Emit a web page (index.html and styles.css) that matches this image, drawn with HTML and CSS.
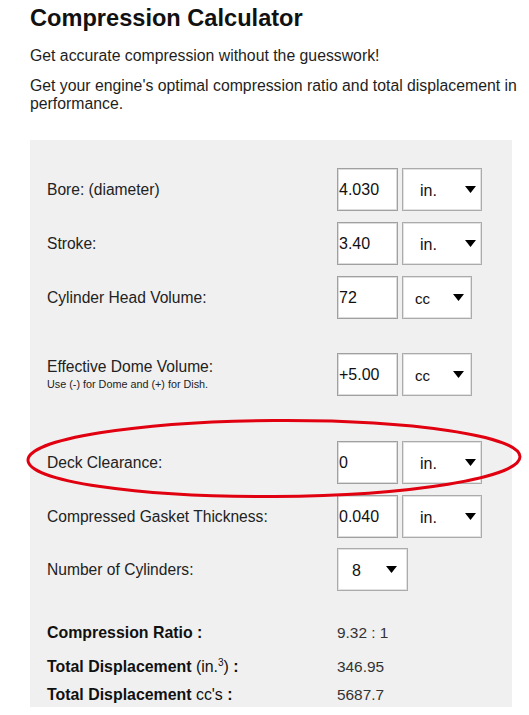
FILE: index.html
```html
<!DOCTYPE html>
<html>
<head>
<meta charset="utf-8">
<link rel="stylesheet" href="styles.css">
</head>
<body>
<div class="page">
  <h1 class="title">Compression Calculator</h1>
  <p class="intro first">Get accurate compression without the guesswork!</p>
  <p class="intro second">Get your engine's optimal compression ratio and total displacement in<br>performance.</p>

  <div class="panel">
    <div class="row">
      <div class="label">Bore: (diameter)</div>
      <div class="field">4.030</div>
      <div class="sel sel-in"><span>in.</span><svg class="arrow" width="11" height="7" viewBox="0 0 11 7"><path d="M0 0H11L5.5 7Z"/></svg></div>
    </div>
    <div class="row gap">
      <div class="label">Stroke:</div>
      <div class="field">3.40</div>
      <div class="sel sel-in"><span>in.</span><svg class="arrow" width="11" height="7" viewBox="0 0 11 7"><path d="M0 0H11L5.5 7Z"/></svg></div>
    </div>
    <div class="row gap">
      <div class="label">Cylinder Head Volume:</div>
      <div class="field">72</div>
      <div class="sel sel-cc"><span>cc</span><svg class="arrow" width="11" height="7" viewBox="0 0 11 7"><path d="M0 0H11L5.5 7Z"/></svg></div>
    </div>
    <div class="row row-dome">
      <div class="label">Effective Dome Volume:<div class="note">Use (-) for Dome and (+) for Dish.</div></div>
      <div class="field">+5.00</div>
      <div class="sel sel-cc"><span>cc</span><svg class="arrow" width="11" height="7" viewBox="0 0 11 7"><path d="M0 0H11L5.5 7Z"/></svg></div>
    </div>
    <div class="row row-deck">
      <div class="label">Deck Clearance:</div>
      <div class="field">0</div>
      <div class="sel sel-in"><span>in.</span><svg class="arrow" width="11" height="7" viewBox="0 0 11 7"><path d="M0 0H11L5.5 7Z"/></svg></div>
    </div>
    <div class="row gap">
      <div class="label">Compressed Gasket Thickness:</div>
      <div class="field">0.040</div>
      <div class="sel sel-in"><span>in.</span><svg class="arrow" width="11" height="7" viewBox="0 0 11 7"><path d="M0 0H11L5.5 7Z"/></svg></div>
    </div>
    <div class="row row-last">
      <div class="label">Number of Cylinders:</div>
      <div class="sel sel-cyl"><span>8</span><svg class="arrow" width="11" height="7" viewBox="0 0 11 7"><path d="M0 0H11L5.5 7Z"/></svg></div>
    </div>

    <div class="result result-first">
      <div class="rlabel"><b>Compression Ratio :</b></div>
      <div class="rvalue">9.32 : 1</div>
    </div>
    <div class="result result-disp">
      <div class="rlabel"><b>Total Displacement</b> (in.<sup>3</sup>) <b>:</b></div>
      <div class="rvalue">346.95</div>
    </div>
    <div class="result result-cc">
      <div class="rlabel"><b>Total Displacement</b> cc's <b>:</b></div>
      <div class="rvalue">5687.7</div>
    </div>
  </div>

  <svg class="mark" width="529" height="715" viewBox="0 0 529 715">
    <ellipse cx="274" cy="458.5" rx="246" ry="38" fill="none" stroke="#e0000f" stroke-width="3" transform="rotate(-0.4 274 458.5)"/>
  </svg>
</div>
</body>
</html>
```
FILE: styles.css
```css
html, body {
  margin: 0;
  padding: 0;
  background: #ffffff;
  overflow: hidden;
}

body {
  font-family: "Liberation Sans", Arial, sans-serif;
  color: #1e1e1e;
}

.page {
  position: relative;
  width: 529px;
  height: 715px;
  padding-left: 30px;
  box-sizing: border-box;
}

.title {
  margin: 0;
  padding-top: 5px;
  font-size: 23.6px;
  line-height: 26px;
  font-weight: bold;
  color: #111111;
}

.intro {
  margin: 0;
  font-size: 15.8px;
  line-height: 18px;
  color: #1e1e1e;
}

.intro.first {
  margin-top: 16px;
}

.intro.second {
  margin-top: 12px;
  white-space: nowrap;
}

.panel {
  margin-top: 27px;
  width: 482px;
  background: #f0f0f0;
  padding: 28px 0 3px 17px;
  box-sizing: border-box;
}

.row {
  display: flex;
  align-items: center;
  height: 43px;
}

.row.gap {
  margin-top: 11px;
}

.row-dome {
  margin-top: 34px;
}

.row-deck {
  margin-top: 45px;
}

.row-last {
  margin-top: 10px;
}

.label {
  width: 290px;
  font-size: 15.6px;
  line-height: 18px;
  color: #222222;
}

.note {
  font-size: 10.8px;
  line-height: 13px;
  margin-top: 2px;
  color: #222222;
}

.field {
  width: 61px;
  height: 43px;
  box-sizing: border-box;
  background: #ffffff;
  border: 1px solid #a0a0a0;
  box-shadow: inset 0 0 0 1px #dcdcdc;
  padding-left: 1px;
  display: flex;
  align-items: center;
  font-size: 16px;
  color: #111111;
}

.sel {
  margin-left: 4px;
  height: 43px;
  box-sizing: border-box;
  background: #ffffff;
  border: 1px solid #ababab;
  box-shadow: inset 0 0 0 1px #e2e2e2;
  display: flex;
  align-items: center;
  justify-content: space-between;
  font-size: 16px;
  color: #111111;
}

.sel span {
  padding-top: 2px;
}

.arrow {
  display: block;
  fill: #000000;
}

.sel-in {
  width: 80px;
  padding: 0 5px 0 17px;
}

.sel-cc {
  width: 70px;
  padding: 0 7px 0 12px;
}

.sel-cc span {
  font-size: 15px;
}

.sel-cyl {
  margin-left: 0;
  width: 71px;
  padding: 0 10px 0 14px;
}

.result {
  display: flex;
  line-height: 18px;
}

.result-first {
  margin-top: 33px;
}

.result-disp {
  margin-top: 16px;
}

.result-cc {
  margin-top: 10px;
}

.rlabel {
  width: 290px;
  font-size: 15.9px;
  color: #111111;
}

.rlabel b {
  font-weight: bold;
}

.rlabel sup {
  font-size: 10px;
  line-height: 0;
}

.rvalue {
  font-size: 15.4px;
  color: #333333;
}

.mark {
  position: absolute;
  left: 0;
  top: 0;
  pointer-events: none;
}
```
